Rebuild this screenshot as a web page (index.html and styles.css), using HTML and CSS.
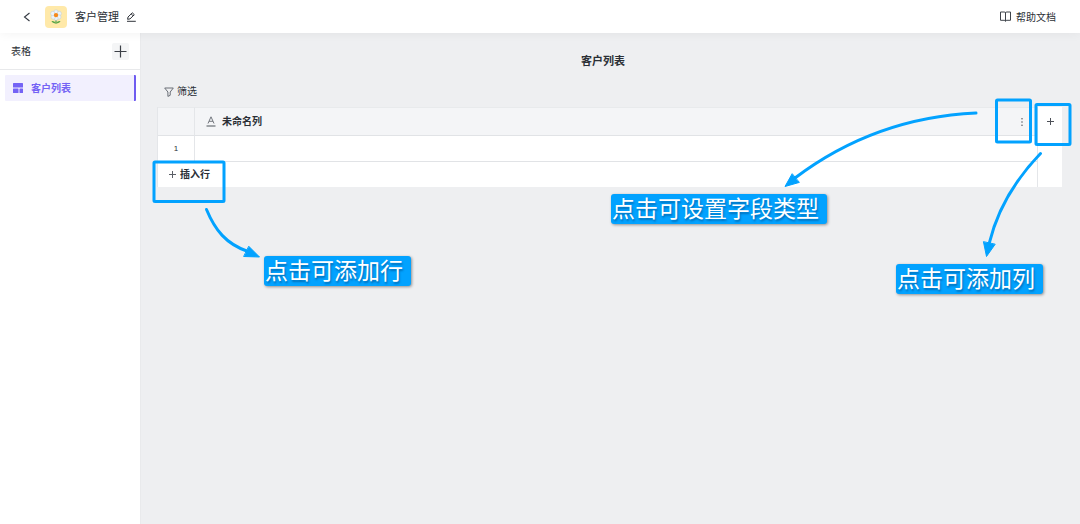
FILE: index.html
```html
<!DOCTYPE html>
<html lang="zh-CN">
<head>
<meta charset="utf-8">
<title>客户管理</title>
<link rel="stylesheet" href="styles.css">
</head>
<body>
<div class="app">
  <header class="topbar">
    <button class="icon-btn back" type="button" aria-label="返回">
      <svg width="8" height="10" viewBox="0 0 8 10" fill="none" stroke="#333840" stroke-width="1.1"><path d="M6.500 1 1.500 5l5 4"/></svg>
    </button>
    <span class="logo">
      <svg width="14" height="16" viewBox="0 0 14 16">
        <path d="M7 8v6.500" stroke="#4d9c43" stroke-width="1.200"/>
        <path d="M7 14.500C4.500 14.500 3 13.500 2.500 12c2.500-.3 4 .8 4.500 2.500Zm0 0c2.500 0 4-1 4.500-2.500-2.500-.3-4 .8-4.500 2.500Z" fill="#5aa648"/>
        <g fill="#eef3f7" stroke="#b9cbd9" stroke-width=".5"><circle cx="7" cy="3" r="2.200"/><circle cx="10.200" cy="4.500" r="2.200"/><circle cx="9.800" cy="8" r="2.200"/><circle cx="7" cy="9.300" r="2.100"/><circle cx="4.200" cy="8" r="2.200"/><circle cx="3.800" cy="4.500" r="2.200"/></g>
        <circle cx="7" cy="6.100" r="2.200" fill="#f68a1c"/>
      </svg>
    </span>
    <h1 class="app-name">客户管理</h1>
    <button class="icon-btn edit" type="button" aria-label="重命名">
      <svg width="10" height="10" viewBox="0 0 10 10" fill="none" stroke="#30343b" stroke-width="1"><path d="M1 9.300h8.800M1.600 7.300l.4-2.300L6.300.8l2 1.900L4 6.900Zm3.600-5.400 2 2"/></svg>
    </button>
    <a class="help" href="#help">
      <svg width="11" height="11" viewBox="0 0 11 11" fill="none" stroke="#3f444b" stroke-width="1"><path d="M5.500 1.500v9M.5 1h3.700q1.300 0 1.300.9Q5.500 1 6.800 1h3.700v8.300H6.800q-1.300 0-1.300.9 0-.9-1.300-.9H.5Z"/></svg>
      <span class="label">帮助文档</span>
    </a>
  </header>

  <div class="body">
    <aside class="sidebar">
      <div class="side-head">
        <h2 class="side-title">表格</h2>
        <button class="icon-btn add-table" type="button" aria-label="新建表格">
          <svg width="13" height="13" viewBox="0 0 13 13" stroke="#3c4047" stroke-width="1.200"><path d="M6.500.5v12M.5 6.500h12"/></svg>
        </button>
      </div>
      <nav class="side-list">
        <a class="side-item" href="#list">
          <svg width="10" height="10" viewBox="0 0 10 10" fill="#7463f5"><rect width="10" height="4.500" rx=".5"/><rect y="5.500" width="5.500" height="4.500" rx=".5"/><rect x="6.500" y="5.500" width="3.500" height="4.500" rx=".5"/></svg>
          <span class="label">客户列表</span>
        </a>
      </nav>
    </aside>

    <main class="content">
      <h2 class="title">客户列表</h2>
      <button class="icon-btn filter" type="button">
        <svg width="10" height="10" viewBox="0 0 10 10" fill="none" stroke="#6a6f77" stroke-width="1"><path d="M.7 1h8.600L6.200 5v3.300L3.900 9.400V5Z"/></svg>
        筛选
      </button>

      <div class="sheet">
        <table class="grid">
          <colgroup><col class="col-index"><col><col class="col-add"></colgroup>
          <thead>
            <tr>
              <th></th>
              <th>
                <div class="field">
                  <svg width="10" height="11" viewBox="0 0 10 11" fill="none" stroke="#73777e" stroke-width="1"><path d="M2 7.500 5 .8l3 6.700M3 5.300h4"/><path d="M.5 10h9" stroke-width="1.300"/></svg>
                  <span>未命名列</span>
                  <button class="icon-btn more" type="button" aria-label="字段设置">
                    <svg width="2" height="8" viewBox="0 0 2 8" fill="#6d7178"><rect x=".3" width="1.400" height="1.400"/><rect x=".3" y="3.300" width="1.400" height="1.400"/><rect x=".3" y="6.600" width="1.400" height="1.400"/></svg>
                  </button>
                </div>
              </th>
              <th class="add-cell">
                <button class="icon-btn add-column" type="button" aria-label="添加列">
                  <svg width="7" height="7" viewBox="0 0 7 7" stroke="#4d5158" stroke-width="1"><path d="M3.500 0v7M0 3.500h7"/></svg>
                </button>
              </th>
            </tr>
          </thead>
          <tbody>
            <tr><td class="index">1</td><td></td><td class="add-cell"></td></tr>
            <tr class="insert">
              <td colspan="2">
                <button class="icon-btn add-row" type="button">
                  <svg width="7" height="7" viewBox="0 0 7 7" stroke="#5b5f66" stroke-width="1"><path d="M3.500 0v7M0 3.500h7"/></svg>
                  插入行
                </button>
              </td>
              <td class="add-cell"></td>
            </tr>
          </tbody>
        </table>

        <div class="guide guide-left">
          <svg class="marks" viewBox="157 107 260 190">
            <rect x="154" y="162" width="70" height="39.500" rx="1"/>
            <path d="M206.500 209.500C215 230 226 244 248 251.500"/>
            <path class="head" d="M249 246.500 259.500 257 244 256.500Z"/>
          </svg>
          <p class="callout callout-row">点击可添加行</p>
        </div>
        <div class="guide guide-right">
          <svg class="marks" viewBox="602 107 460 190">
            <rect x="996.500" y="100" width="34" height="42" rx="1"/>
            <rect x="1036" y="104.500" width="34" height="40" rx="1"/>
            <path d="M976 113C910 116 848 138 795 178"/>
            <path class="head" d="M792 174 785 186.500 799 182.500Z"/>
            <path d="M1040.500 153.500C1014 181 997 211 989 244"/>
            <path class="head" d="M983.500 242 986.500 256.500 995 244.500Z"/>
          </svg>
          <p class="callout callout-field">点击可设置字段类型</p>
          <p class="callout callout-column">点击可添加列</p>
        </div>
      </div>
    </main>
  </div>
</div>
</body>
</html>
```

FILE: styles.css
```css
* { box-sizing: border-box; }

body {
  margin: 0;
  font-family: "Liberation Sans", "Noto Sans CJK SC", sans-serif;
  font-size: 10px;
  line-height: 16px;
  color: #2b2f36;
}

svg { display: block; flex: none; }
h1, h2, p { margin: 0; }
a { color: inherit; text-decoration: none; }

.icon-btn {
  display: flex;
  align-items: center;
  justify-content: center;
  padding: 0;
  border: 0;
  background: none;
  font: inherit;
  color: inherit;
  cursor: pointer;
}

.app { display: flex; flex-direction: column; min-height: 100vh; }

.topbar {
  position: relative;
  z-index: 1;
  display: flex;
  align-items: center;
  height: 33px;
  padding: 0 24px 0 23px;
  background: #fff;
  box-shadow: 0 1px 10px rgba(0, 0, 0, 0.05);
}
.logo {
  display: flex;
  align-items: center;
  justify-content: center;
  width: 22px;
  height: 22px;
  margin: 0 8px 0 14px;
  border-radius: 4px;
  background: #ffe9a9;
}
.app-name { font-size: 11px; font-weight: 400; }
.edit { margin-left: 7px; }
.help { display: flex; align-items: center; gap: 5px; margin-left: auto; }
.label { padding-top: 2px; }

.body { display: flex; flex: 1; }

.sidebar { width: 141px; background: #fff; border-right: 1px solid #e9eaec; }
.side-head {
  display: flex;
  align-items: center;
  justify-content: space-between;
  height: 37px;
  padding: 0 11px;
  border-bottom: 1px solid #e8e9eb;
}
.side-title { padding-top: 2px; font-size: 10px; font-weight: 400; }
.add-table { width: 17px; height: 17px; border-radius: 2px; background: #f4f5f6; }
.side-list { padding: 5px 4px 5px 5px; }
.side-item {
  display: flex;
  align-items: center;
  gap: 8px;
  height: 26px;
  padding-left: 8px;
  border-right: 2px solid #6f5cf0;
  border-radius: 1px;
  background: #f2f0fe;
  color: #7463f5;
  font-weight: 700;
}

.content { flex: 1; min-width: 0; padding: 20px 18px 0 16px; background: #eeeff1; }
.title { padding-right: 13px; font-size: 11px; font-weight: 700; text-align: center; }
.filter { gap: 3px; margin: 15px 0 7px 7px; }

.sheet { position: relative; }
.grid {
  width: 100%;
  table-layout: fixed;
  border-collapse: separate;
  border-spacing: 0;
  background: #fff;
  border-left: 1px solid #e4e6e9;
}
.col-index { width: 37px; }
.col-add { width: 24px; }
.grid th, .grid td { padding: 0; border-bottom: 1px solid #e1e3e6; border-right: 1px solid #e4e6e9; }
.grid th { height: 29px; background: #f4f5f7; text-align: left; border-top: 1px solid #e8eaec; }
.grid td { height: 26px; }
.grid .add-cell { background: #fff; border: 0; }
.grid .insert td { height: 25px; border-bottom: 0; }
.grid .index { text-align: center; font-size: 8px; }

.field { display: flex; align-items: center; gap: 6px; padding: 0 14px 0 11px; }
.more { margin-left: auto; }
.add-column { width: 100%; height: 28px; }
.add-row { gap: 4px; margin-left: 11px; font-weight: 700; }

.guide { position: absolute; top: 0; height: 190px; pointer-events: none; }
.guide-left { left: 0; width: 260px; }
.guide-right { right: 0; width: 460px; }
.marks { width: 100%; height: 100%; overflow: visible; fill: none; stroke: #02a2ff; stroke-width: 3; stroke-linecap: round; }
.marks .head { fill: #02a2ff; stroke-width: 1; }

.callout {
  position: absolute;
  padding: 0 8px 0 1px;
  border-radius: 3px;
  background: #02a2ff;
  color: #fff;
  font-size: 23px;
  line-height: 30px;
  white-space: nowrap;
  text-shadow: 1px 2px 2px rgba(0, 50, 100, 0.45);
  box-shadow: 1px 1px 3px rgba(0, 0, 0, 0.4);
}
.callout-row { top: 149px; left: 107px; }
.callout-field { top: 87px; right: 235px; }
.callout-column { top: 157px; right: 19px; }
```
